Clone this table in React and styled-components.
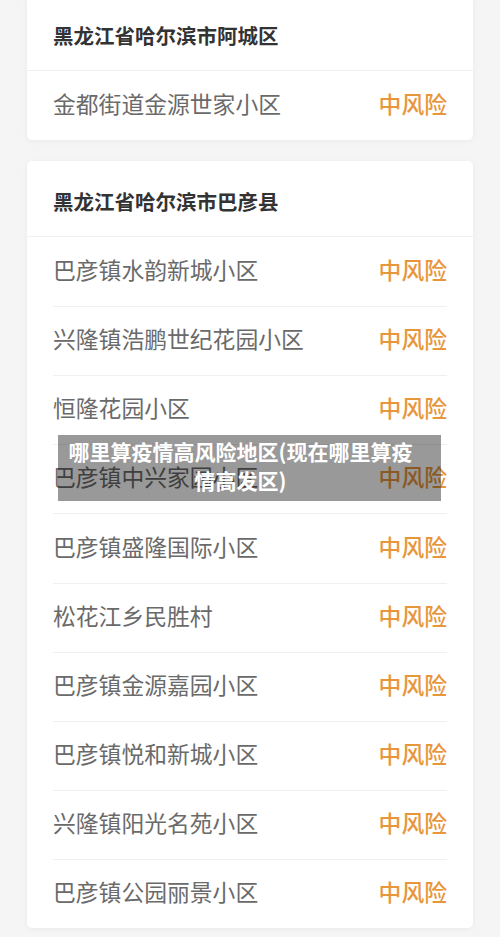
import React from 'react';
import styled, { createGlobalStyle } from 'styled-components';

const GlobalStyle = createGlobalStyle`
  body {
    margin: 0;
    background: #f5f5f5;
    font-family: "Noto Sans CJK SC", "Noto Sans", sans-serif;
  }
`;

const Page = styled.div`
  position: relative;
  width: 500px;
  height: 937px;
  overflow: hidden;
  padding: 0 27px;
  box-sizing: border-box;
`;

const Card = styled.div`
  background: #fff;
  border-radius: 5px;
  box-shadow: 0 1px 6px rgba(0, 0, 0, 0.05);
  margin-top: ${(p) => p.$top}px;
`;

const Header = styled.div`
  height: 76px;
  box-sizing: border-box;
  padding: 5px 26px 0;
  display: flex;
  align-items: center;
  border-bottom: 1px solid #f0f0f0;
  font-size: 20.5px;
  font-weight: 700;
  color: #333;
`;

const Row = styled.div`
  height: 69.1px;
  box-sizing: border-box;
  margin: 0 26px;
  padding-bottom: 5px;
  display: flex;
  align-items: center;
  justify-content: space-between;
  border-top: ${(p) => (p.$first ? 'none' : '1px solid #f0f0f0')};
`;

const Place = styled.span`
  font-size: 22.8px;
  color: #6a6a6a;
`;

const Risk = styled.span`
  font-size: 22.8px;
  font-weight: 500;
  color: #e8963c;
`;

const Banner = styled.div`
  position: absolute;
  top: 435px;
  left: 58px;
  width: 383px;
  height: 66px;
  background: rgba(0, 0, 0, 0.4);
  color: #fff;
  font-size: 21px;
  font-weight: 700;
  line-height: 29px;
  text-align: center;
  padding: 2px 18px 0 0;
  box-sizing: border-box;
`;

const groups = [
  {
    title: '黑龙江省哈尔滨市阿城区',
    top: -5,
    items: ['金都街道金源世家小区'],
  },
  {
    title: '黑龙江省哈尔滨市巴彦县',
    top: 21,
    items: [
      '巴彦镇水韵新城小区',
      '兴隆镇浩鹏世纪花园小区',
      '恒隆花园小区',
      '巴彦镇中兴家园小区',
      '巴彦镇盛隆国际小区',
      '松花江乡民胜村',
      '巴彦镇金源嘉园小区',
      '巴彦镇悦和新城小区',
      '兴隆镇阳光名苑小区',
      '巴彦镇公园丽景小区',
    ],
  },
];

export default function App() {
  return (
    <Page>
      <GlobalStyle />
      {groups.map((g) => (
        <Card key={g.title} $top={g.top}>
          <Header>{g.title}</Header>
          {g.items.map((name, i) => (
            <Row key={name} $first={i === 0}>
              <Place>{name}</Place>
              <Risk>中风险</Risk>
            </Row>
          ))}
        </Card>
      ))}
      <Banner>
        哪里算疫情高风险地区(现在哪里算疫
        <br />
        情高发区)
      </Banner>
    </Page>
  );
}
